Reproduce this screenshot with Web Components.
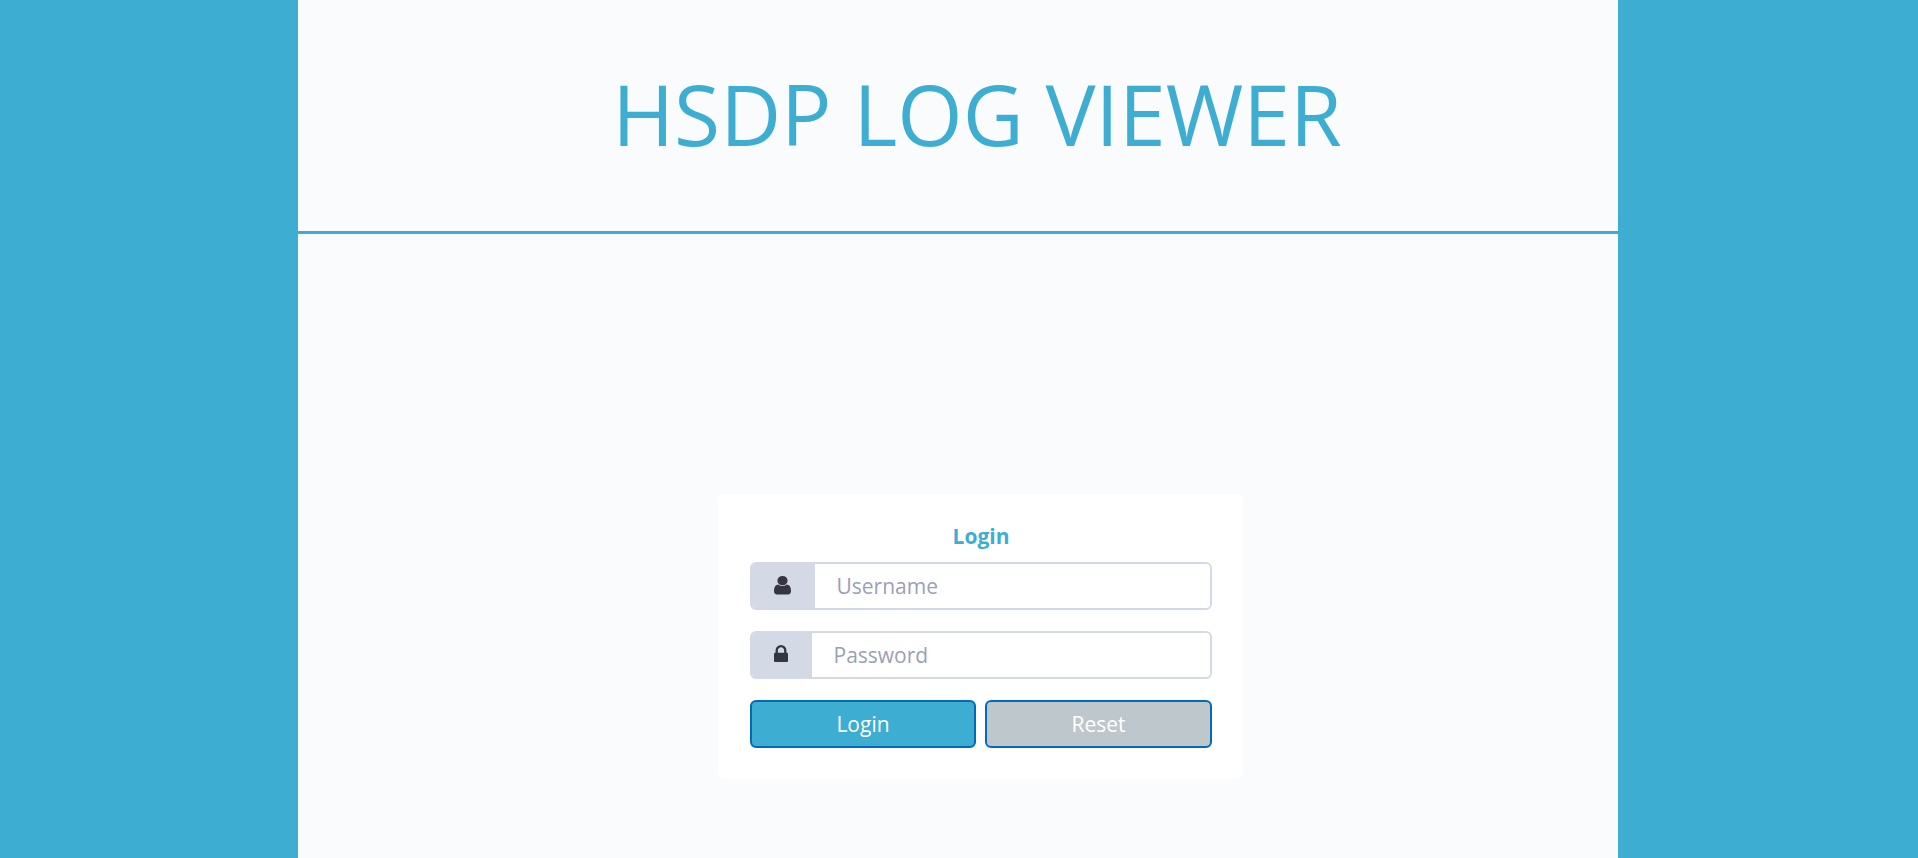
<!DOCTYPE html>
<html lang="en">
<head>
<meta charset="utf-8">
<title>HSDP Log Viewer</title>
<style>
html, body { margin: 0; height: 100%; }
body { background: #3dadd2; font-family: "Open Sans", "Noto Sans", sans-serif; overflow: hidden; }
</style>
</head>
<body>
<log-app>
  <app-header>HSDP LOG VIEWER</app-header>
  <login-card heading="Login">
    <icon-field icon="user" placeholder="Username" type="text"></icon-field>
    <icon-field icon="lock" placeholder="Password" type="password"></icon-field>
    <action-button slot="actions">Login</action-button>
    <action-button slot="actions" muted>Reset</action-button>
  </login-card>
</log-app>
<script>
function define(name, render) {
  customElements.define(name, class extends HTMLElement {
    connectedCallback() {
      if (!this.shadowRoot) this.attachShadow({ mode: 'open' }).innerHTML = render(this);
    }
  });
}

define('log-app', () => `
<style>
:host { display: flex; flex-direction: column; align-items: stretch; box-sizing: border-box; width: 1320px; height: 100vh; margin: 0 auto 0 298px; background: #fafbfd; }
</style><slot></slot>`);

define('app-header', () => `
<style>
:host { display: flex; justify-content: center; align-items: center; box-sizing: border-box; height: 234px; padding: 0 0 4px 38px; border-bottom: 3px solid #3dadd2; }
h1 { margin: 0; font-size: 84px; line-height: 114px; font-weight: 400; color: #3dadd2; white-space: nowrap; }
</style><h1><slot></slot></h1>`);

define('login-card', el => `
<style>
:host { display: flex; flex-direction: column; box-sizing: border-box; width: 525px; height: 285px; margin: 260px 0 0 420px; padding: 27px 31px 31px 32px; background: #fff; border-radius: 6px; }
h2 { margin: 0 0 11px; font-size: 21px; line-height: 30px; font-weight: 700; text-align: center; color: #3dadd2; }
.fields { display: flex; flex-direction: column; gap: 21px; }
.actions { display: grid; grid-template-columns: 226px 227px; gap: 9px; margin-top: 21px; }
</style>
<h2>${el.getAttribute('heading')}</h2>
<div class="fields"><slot></slot></div>
<div class="actions"><slot name="actions"></slot></div>`);

const icons = {
  user: { width: 17, height: 18.5, addon: 65, box: '256 128 1280 1536', d: 'M1536 1399q0 109-62.5 187t-150.5 78h-854q-88 0-150.5-78t-62.5-187q0-85 8.5-160.5t31.5-152 58.5-131 94-89 134.5-34.5q131 128 313 128t313-128q76 0 134.5 34.5t94 89 58.5 131 31.5 152 8.5 160.5zm-256-887q0 159-112.5 271.5t-271.5 112.5-271.5-112.5-112.5-271.5 112.5-271.5 271.5-112.5 271.5 112.5 112.5 271.5z' },
  lock: { width: 14, height: 17, addon: 62, box: '320 128 1152 1408', d: 'M640 768h512v-192q0-106-75-181t-181-75-181 75-75 181v192zm832 96v576q0 40-28 68t-68 28h-960q-40 0-68-28t-28-68v-576q0-40 28-68t68-28h32v-192q0-184 132-316t316-132 316 132 132 316v192h32q40 0 68 28t28 68z' }
};

define('icon-field', el => {
  const i = icons[el.getAttribute('icon')];
  return `
<style>
:host { display: flex; box-sizing: border-box; height: 48px; border: 2px solid #d3d9e5; border-radius: 6px; background: #fff; overflow: hidden; }
.addon { box-sizing: border-box; width: ${i.addon - 2}px; padding: 12px 0 0 21.5px; background: #d3d9e5; flex: none; }
svg { display: block; width: ${i.width}px; height: ${i.height}px; fill: #343642; }
input { flex: 1; min-width: 0; border: 0; outline: 0; margin: 0; padding: 0 21.5px; background: transparent; font: 400 21px/30px "Open Sans", "Noto Sans", sans-serif; }
input::placeholder { color: #9aa1b5; opacity: 1; }
</style>
<span class="addon"><svg viewBox="${i.box}" preserveAspectRatio="none" aria-hidden="true"><path d="${i.d}"/></svg></span>
<input type="${el.getAttribute('type')}" placeholder="${el.getAttribute('placeholder')}">`;
});

define('action-button', el => `
<style>
:host { display: block; }
button { display: block; box-sizing: border-box; width: 100%; height: 48px; margin: 0; padding: 0; border: 2px solid #006bb8; border-radius: 6px; background: ${el.hasAttribute('muted') ? '#bdc7cc' : '#3dadd2'}; color: #fff; font: 400 21px/30px "Open Sans", "Noto Sans", sans-serif; }
</style><button type="button"><slot></slot></button>`);
</script>
</body>
</html>
